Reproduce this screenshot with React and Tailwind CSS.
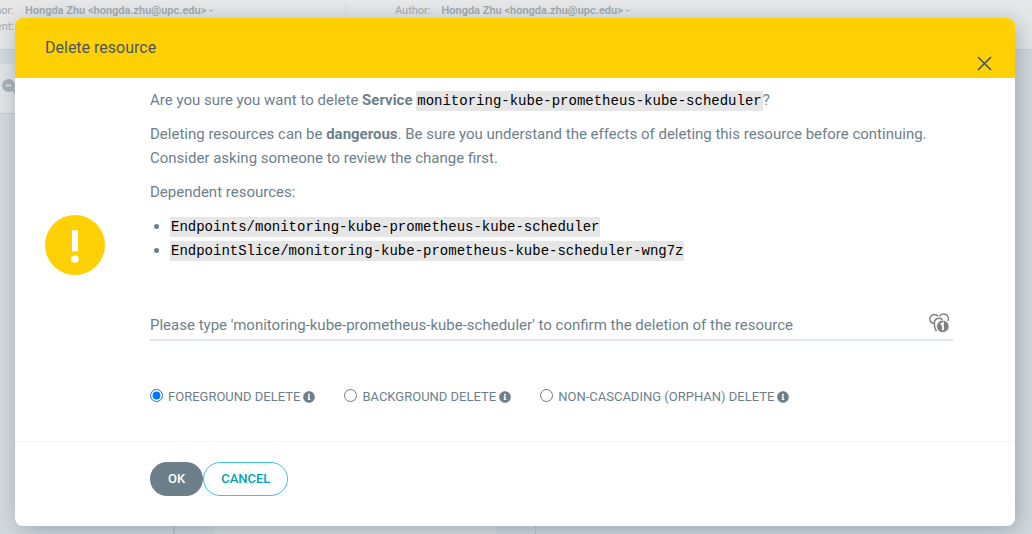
import React from "react";
import { FaInfoCircle } from "react-icons/fa";

const SERVICE = "monitoring-kube-prometheus-kube-scheduler";
const DEPENDENTS = [
  "Endpoints/monitoring-kube-prometheus-kube-scheduler",
  "EndpointSlice/monitoring-kube-prometheus-kube-scheduler-wng7z",
];
const MODES = ["Foreground Delete", "Background Delete", "Non-Cascading (Orphan) Delete"];

function Code({ children }) {
  return (
    <code className="bg-[#e6e6e6] px-px py-0.5 font-['Liberation_Mono',monospace] text-[14px] leading-4 whitespace-nowrap text-black">
      {children}
    </code>
  );
}

function Backdrop() {
  return (
    <div aria-hidden="true" className="flex min-h-screen flex-col overflow-hidden bg-[#d6dbdf] text-[11px] leading-4 text-[#a3a9ad]">
      <div className="flex h-[50px] border-b border-[#d0d4d7] bg-[#e8e9ea] pt-[3px]">
        <div className="w-[346px] border-r border-[#dcdfe1]">
          <div className="flex gap-[11px]">
            <span className="flex w-[14px] justify-end">Author:</span>
            <span className="font-semibold whitespace-nowrap">Hongda Zhu &lt;hongda.zhu@upc.edu&gt; -</span>
          </div>
          <div className="flex">
            <span className="flex w-[14px] justify-end">Comment:</span>
          </div>
        </div>
        <div className="flex gap-[11px] pl-[49px]">
          <span>Author:</span>
          <span className="font-semibold whitespace-nowrap">Hongda Zhu &lt;hongda.zhu@upc.edu&gt; -</span>
        </div>
      </div>
      <div className="mt-[14px] flex h-[50px] w-[214px] items-center border-y border-[#dfe2e4] border-b-[#c9cfd3] bg-[#e4e6e8] pl-0.5">
        <svg viewBox="0 0 16 16" className="-mt-1 size-4" fill="none">
          <path d="M10 10L15 15" stroke="#aab2b8" strokeWidth="2.6" />
          <circle cx="6.5" cy="6.5" r="6.5" fill="#aab2b8" />
          <path d="M3.5 6.5H9.5" stroke="#e4e6e8" strokeWidth="1.4" />
        </svg>
      </div>
      <div className="flex flex-1">
        <div className="w-[175px] border-r-2 border-[#bcc5cb]" />
        <div className="ml-[39px] w-[282px] bg-[#dfe1e1]" />
        <div className="w-10 border-r border-dashed border-[#b4bfc6]" />
      </div>
    </div>
  );
}

function PasswordManagerIcon() {
  return (
    <svg viewBox="0 0 22 20" className="h-5 w-[22px]" fill="none" stroke="#808080" strokeWidth="1.5">
      <path d="M6.5 10.6A4.6 4.6 0 1 1 10 3.2" />
      <path d="M11.4 3.4A4.7 4.7 0 1 1 19.8 8" />
      <path d="M8.6 18.2C7 16.4 6.4 13.6 6.4 10.2A4.6 4.6 0 0 1 14.6 7" />
      <circle cx="14.8" cy="13.4" r="6.2" fill="#808080" stroke="white" strokeWidth="0.7" />
      <path d="M12.6 11.6L14.9 10.2V17.2" stroke="white" strokeWidth="1.9" />
    </svg>
  );
}

export default function App() {
  return (
    <div className="relative font-[Roboto,sans-serif]">
      <Backdrop />
      <div className="absolute inset-0 pt-[18px] pr-[17px] pl-[15px]">
        <div
          role="dialog"
          aria-modal="true"
          aria-labelledby="dialog-title"
          className="overflow-hidden rounded-lg bg-white text-[15px] leading-6 text-[#6d7f8b] shadow-[3px_4px_24px_rgba(85,115,133,0.5)]"
        >
          <header className="flex h-[60px] justify-between bg-[#ffd003] pr-[23px] pl-[30px] text-[#495763]">
            <h1 id="dialog-title" className="pt-[18px] text-[16px]">Delete resource</h1>
            <button type="button" aria-label="Close" className="mt-[38px] flex size-[15px] items-center justify-center">
              <svg viewBox="0 0 15 15" className="size-[15px]" stroke="currentColor" strokeWidth="1.7">
                <path d="M1 1L14 14M14 1L1 14" />
              </svg>
            </button>
          </header>

          <form>
            <div className="flex items-center gap-[45px] border-b border-[#f3f5f6] pt-[10px] pr-[62px] pb-8 pl-[30px]">
              <svg viewBox="0 0 60 60" className="mb-2 size-[60px] shrink-0" aria-hidden="true">
                <circle cx="30" cy="30" r="30" fill="#ffd003" />
                <path d="M27 15.3H33V36.3H27Z" fill="white" />
                <circle cx="30" cy="44" r="3.8" fill="white" />
              </svg>
              <div className="min-w-0 flex-1">
                <p>
                  Are you sure you want to delete <strong>Service</strong> <Code>{SERVICE}</Code>?
                </p>
                <p className="mt-[10px]">
                  Deleting resources can be <strong>dangerous</strong>. Be sure you understand the effects of deleting
                  this resource before continuing. Consider asking someone to review the change first.
                </p>
                <p className="mt-[10px]">Dependent resources:</p>
                <ul className="mt-[10px] list-disc pl-5">
                  {DEPENDENTS.map((name) => (
                    <li key={name}>
                      <Code>{name}</Code>
                    </li>
                  ))}
                </ul>

                <div className="mt-12 flex items-center border-b-2 border-[#dee6eb]">
                  <input
                    type="text"
                    aria-label="Resource name"
                    placeholder={`Please type '${SERVICE}' to confirm the deletion of the resource`}
                    className="h-[29px] min-w-0 flex-1 bg-transparent outline-none placeholder:text-[#6d7f8b]"
                  />
                  <span className="mr-[3px] mb-1">
                    <PasswordManagerIcon />
                  </span>
                </div>

                <div className="mt-11 flex gap-[29px] text-[13px] uppercase">
                  {MODES.map((mode, i) => (
                    <label key={mode} className="flex items-center whitespace-nowrap">
                      <input type="radio" name="mode" defaultChecked={i === 0} className="mr-[5px] mb-1 size-[13px]" />
                      {mode}
                      <FaInfoCircle className="ml-[3px] size-3" />
                    </label>
                  ))}
                </div>
              </div>
            </div>

            <footer className="flex pt-5 pb-[30px] pl-[135px] text-[13px] font-medium">
              <button type="button" className="h-[34px] rounded-full bg-[#6d7f8b] px-[18px] text-white">
                OK
              </button>
              <button type="button" className="h-[34px] rounded-full border border-[#3fc6d8] px-[17px] text-[#00a2b3]">
                CANCEL
              </button>
            </footer>
          </form>
        </div>
      </div>
    </div>
  );
}
